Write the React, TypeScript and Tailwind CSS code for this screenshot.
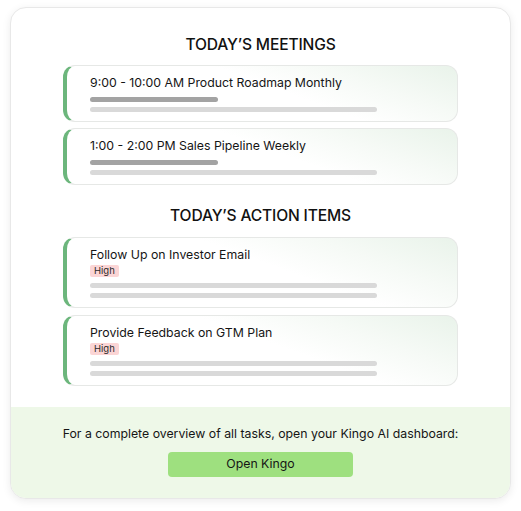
import React from "react";

type Meeting = { title: string };
type ActionItem = { title: string; priority: string };

const MEETINGS: Meeting[] = [
  { title: "9:00 - 10:00 AM Product Roadmap Monthly" },
  { title: "1:00 - 2:00 PM Sales Pipeline Weekly" },
];

const ACTION_ITEMS: ActionItem[] = [
  { title: "Follow Up on Investor Email", priority: "High" },
  { title: "Provide Feedback on GTM Plan", priority: "High" },
];

const cardClass =
  "rounded-[12px] border border-[#e6e8e6] border-l-4 border-l-[#6cb67c] pl-[23px] pr-4 bg-[linear-gradient(200deg,#e9f3ea_0%,#f6faf6_25%,#ffffff_45%)]";

function SectionTitle({ children }: { children: React.ReactNode }) {
  return (
    <h2 className="text-center text-[15.6px] leading-5 font-medium tracking-[-0.01em] text-[#111]">
      {children}
    </h2>
  );
}

function MeetingCard({ meeting }: { meeting: Meeting }) {
  return (
    <div className={`${cardClass} h-[57px] pt-[9px]`}>
      <p className="text-[12.3px] leading-4 text-[#151515]">{meeting.title}</p>
      <div className="mt-[6px] h-[5px] w-[128px] rounded-full bg-[#a3a3a3]" />
      <div className="mt-[5px] h-[5px] w-[287px] rounded-full bg-[#d9d9d9]" />
    </div>
  );
}

function ActionCard({ item }: { item: ActionItem }) {
  return (
    <div className={`${cardClass} h-[71px] pt-[9px]`}>
      <p className="text-[12.3px] leading-4 text-[#151515]">{item.title}</p>
      <div className="mt-[2px] w-fit rounded-[2px] bg-[#fbd5d5] px-[4px] text-[9.5px] leading-[12px] text-[#2a2a2a]">
        {item.priority}
      </div>
      <div className="mt-[6px] h-[5px] w-[287px] rounded-full bg-[#d9d9d9]" />
      <div className="mt-[5px] h-[5px] w-[287px] rounded-full bg-[#d9d9d9]" />
    </div>
  );
}

export default function App() {
  return (
    <div
      className="min-h-[511px] w-[521px] bg-white pt-[7px] pl-[10px]"
      style={{ fontFamily: "Inter, 'Noto Sans', sans-serif" }}
    >
      <div className="w-[501px] overflow-hidden rounded-[16px] border border-[#e8e8e8] bg-white shadow-[0_2px_8px_rgba(0,0,0,0.08)]">
        <div className="px-[52px] pt-[27px] pb-[21px]">
          <SectionTitle>TODAY’S MEETINGS</SectionTitle>
          <div className="mt-[10px] flex flex-col gap-[6px]">
            {MEETINGS.map((m) => (
              <MeetingCard key={m.title} meeting={m} />
            ))}
          </div>

          <div className="mt-[21px]">
            <SectionTitle>TODAY’S ACTION ITEMS</SectionTitle>
          </div>
          <div className="mt-[11px] flex flex-col gap-[7px]">
            {ACTION_ITEMS.map((a) => (
              <ActionCard key={a.title} item={a} />
            ))}
          </div>
        </div>

        <div className="flex h-[91px] flex-col items-center bg-[#eef8e8] pt-[19px]">
          <p className="text-[12.3px] leading-4 text-[#151515]">
            For a complete overview of all tasks, open your Kingo AI dashboard:
          </p>
          <button
            type="button"
            className="mt-[10px] h-[25px] w-[185px] rounded-[4px] bg-[#9ee07f] text-[12.3px] text-[#151515]"
          >
            Open Kingo
          </button>
        </div>
      </div>
    </div>
  );
}
